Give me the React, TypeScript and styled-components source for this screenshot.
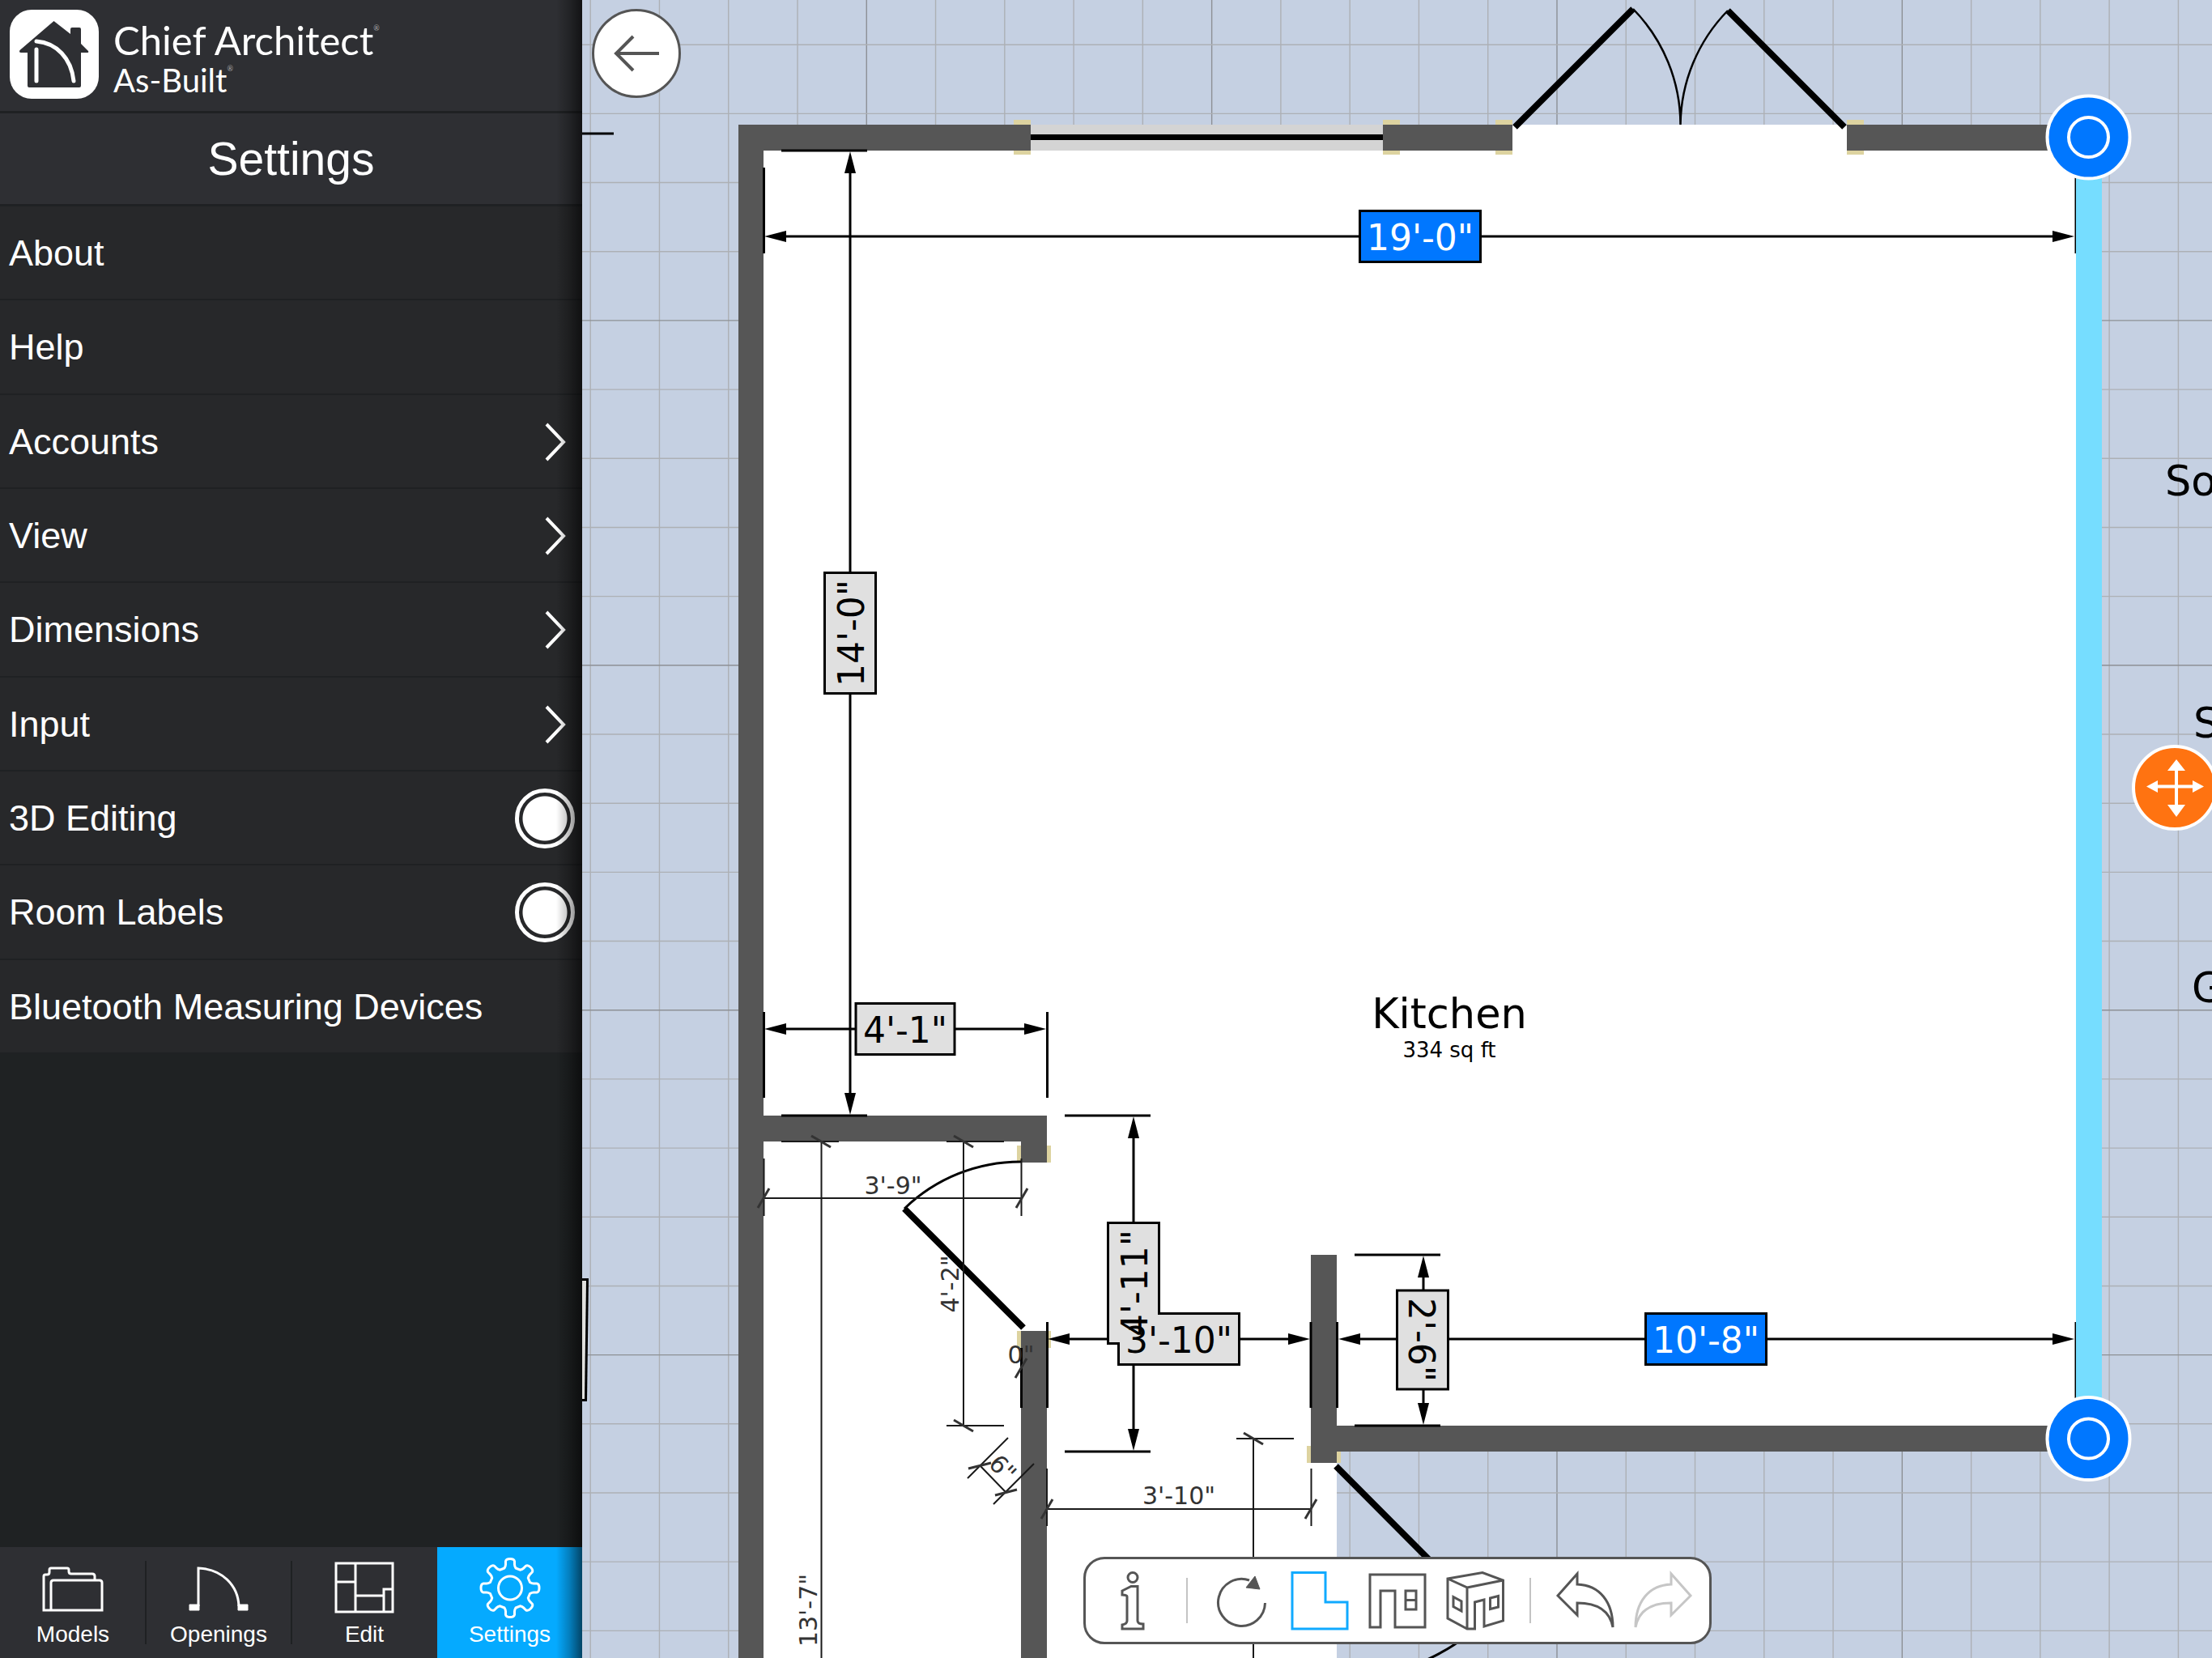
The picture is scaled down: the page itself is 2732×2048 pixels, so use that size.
import React from "react";
import styled, { createGlobalStyle } from "styled-components";

const GlobalStyle = createGlobalStyle`
  * { box-sizing: border-box; }
  html, body { margin: 0; padding: 0; }
  body { background: #c5d0e2; overflow: hidden; }
  button { font: inherit; color: inherit; border: 0; background: none; padding: 0; cursor: pointer; }
`;

const ui = `"Liberation Sans", Arial, sans-serif`;
const planFont = `"DejaVu Sans", Verdana, sans-serif`;

/* ---------- shell ---------- */

const Shell = styled.div`
  display: flex;
  height: 100vh;
  font-family: ${ui};
  color: #fff;
`;

const Panel = styled.aside`
  position: relative;
  flex: 0 0 719px;
  display: flex;
  flex-direction: column;
  background: #1f2223;
  &::after {
    content: "";
    position: absolute;
    top: 0;
    right: 0;
    bottom: 0;
    width: 32px;
    background: linear-gradient(to right, rgba(0, 0, 0, 0), rgba(0, 0, 0, 0.25) 50%, rgba(0, 0, 0, 0.6));
    pointer-events: none;
  }
`;

const Brand = styled.header`
  display: flex;
  align-items: center;
  gap: 18px;
  height: 140px;
  padding: 0 12px 3px;
  background: #2e2f33;
  border-bottom: 3px solid #1f2123;
`;

const BrandText = styled.div`
  display: flex;
  flex-direction: column;
  padding-top: 14px;
  font-family: "Lato", ${ui};
`;

const BrandLine = styled.span<{ $size: number }>`
  display: flex;
  align-items: flex-start;
  font-size: ${(p) => p.$size}px;
  line-height: 50px;
  height: 50px;
  white-space: nowrap;
`;

const Mark = styled.small`
  padding-top: 6px;
  font-size: 9px;
  line-height: 10px;
  color: #a8a8aa;
`;

const Title = styled.h1`
  margin: 0;
  height: 115px;
  border-bottom: 3px solid #1f2123;
  background: #2e2f33;
  font-size: 57px;
  font-weight: 400;
  line-height: 113px;
  text-align: center;
`;

const List = styled.ul`
  display: grid;
  grid-template-rows: repeat(9, 1fr);
  height: 1047px;
  margin: 0 0 auto;
  padding: 0;
  list-style: none;
`;

const Item = styled.li`
  background: #27282a;
  border-bottom: 2px solid #1f2123;
  font-size: 45px;
  button,
  label {
    display: flex;
    align-items: center;
    justify-content: space-between;
    width: 100%;
    height: 100%;
    padding: 2px 9px 0 11px;
    text-align: left;
    white-space: nowrap;
  }
`;

const Toggle = styled.input`
  appearance: none;
  margin: 0;
  width: 74px;
  height: 74px;
  border: 5px solid #fff;
  border-radius: 50%;
  background: radial-gradient(circle, #fff 27px, #27282a 28px);
`;

const TabBar = styled.nav`
  display: grid;
  grid-template-columns: repeat(3, 180px) 1fr;
  height: 137px;
  background: #2e2f33;
`;

const Tab = styled.button<{ $active?: boolean }>`
  position: relative;
  display: flex;
  flex-direction: column;
  align-items: center;
  padding-top: 13px;
  font-size: 28px;
  line-height: 32px;
  background: ${(p) => (p.$active ? "#05aaff" : "transparent")};
  svg { margin-bottom: 3px; }
  & + &::before {
    content: "";
    position: absolute;
    left: -1px;
    top: 17px;
    width: 2px;
    height: 103px;
    background: #1f2123;
  }
`;

/* ---------- canvas ---------- */

const Canvas = styled.main`
  position: relative;
  flex: 1;
  min-width: 0;
  overflow: hidden;
  background: #c5d0e2;
`;

const Drawing = styled.svg`
  display: block;
  width: 100%;
  height: 100%;
  font-family: ${planFont};
`;

const Back = styled.button`
  && {
    position: absolute;
    left: 12px;
    top: 11px;
    width: 110px;
    height: 110px;
    display: grid;
    place-items: center;
    border: 3px solid #555;
    border-radius: 50%;
    background: #fff;
    color: #555;
  }
`;

const ToolDock = styled.div`
  position: absolute;
  left: 0;
  right: 0;
  bottom: 17px;
  display: flex;
  justify-content: center;
  pointer-events: none;
`;

const Toolbar = styled.div`
  display: flex;
  align-items: center;
  height: 108px;
  padding: 0 9px;
  border: 3px solid #555;
  border-radius: 26px;
  background: #fff;
  pointer-events: auto;
`;

const Tool = styled.button<{ $color?: string }>`
  display: grid;
  place-items: center;
  width: 96px;
  height: 96px;
  color: ${(p) => p.$color || "#555"};
`;

const Divider = styled.span`
  width: 2px;
  height: 56px;
  margin: 0 19px;
  background: #c4c4c4;
`;

/* ---------- icons ---------- */

const Glyph = ({ children, size = 72, w = 3 }: { children: React.ReactNode; size?: number; w?: number }) => (
  <svg width={size} height={size} viewBox={`0 0 ${size} ${size}`} fill="none" stroke="currentColor" strokeWidth={w} aria-hidden="true" overflow="visible">
    {children}
  </svg>
);

const ChevronIcon = styled.svg`
  margin-right: 10px;
`;

const Chevron = () => (
  <ChevronIcon width="28" height="50" viewBox="0 0 28 50" fill="none" stroke="#fff" strokeWidth="4" aria-hidden="true">
    <path d="M3 3L24 25L3 47" />
  </ChevronIcon>
);

const LogoMark = () => (
  <svg width="110" height="110" viewBox="0 0 110 110" aria-hidden="true">
    <rect width="110" height="110" rx="27" fill="#fff" />
    <path
      d="M54.500 14L75 30V24Q75 22 77 22H86Q88 22 88 24V42L97 51Q98 53 95.500 53H88V94Q88 96 86 96H24Q22 96 22 94V53H14Q11 53 12.500 50Z"
      fill="#2e2f33"
    />
    <path d="M33 49V88M33 39C58 41 76 60 79 88" fill="none" stroke="#fff" strokeWidth="5" strokeLinecap="round" />
  </svg>
);

const gearPath = (() => {
  const cx = 38;
  const cy = 37.5;
  const parts: string[] = [];
  for (let i = 0; i < 8; i++) {
    const a = (i * Math.PI) / 4;
    const at = (r: number, t: number) => {
      const x = cx + r * Math.cos(a) - t * Math.sin(a);
      const y = cy + r * Math.sin(a) + t * Math.cos(a);
      return `${x.toFixed(2)} ${y.toFixed(2)}`;
    };
    parts.push(
      `${i === 0 ? "M" : "L"}${at(24.5, -7)}Q${at(27, -5.5)} ${at(29, -5.5)}L${at(33, -5.5)}Q${at(36, -5)} ${at(36, 0)}Q${at(36, 5)} ${at(33, 5.5)}L${at(29, 5.5)}Q${at(27, 5.5)} ${at(24.5, 7)}`
    );
  }
  return parts.join("") + "Z";
})();

/* ---------- plan pieces ---------- */

const GRID = 85.27;
const WALL = "#565656";
const TAN = "#ddd3a0";

const Grid = () => (
  <g strokeWidth="1.4">
    {Array.from({ length: 24 }, (_, i) => {
      const x = 729.2 + i * GRID;
      return <line key={`v${i}`} x1={x} x2={x} y1="0" y2="2048" stroke={i % 5 === 4 ? "#8d9095" : "#adb0b5"} />;
    })}
    {Array.from({ length: 24 }, (_, i) => {
      const y = 55.2 + i * 85.18;
      return <line key={`h${i}`} y1={y} y2={y} x1="719" x2="2732" stroke={i % 5 === 4 ? "#8d9095" : "#adb0b5"} />;
    })}
  </g>
);

const Arrow = ({ x, y, r }: { x: number; y: number; r: number }) => (
  <path d="M1 0L28 -7V7Z" transform={`translate(${x} ${y}) rotate(${r})`} />
);

const HDim = ({ y, x1, x2 }: { y: number; x1: number; x2: number }) => (
  <g>
    <line x1={x1 + 20} x2={x2 - 20} y1={y} y2={y} stroke="#000" strokeWidth="3" />
    <Arrow x={x1} y={y} r={0} />
    <Arrow x={x2} y={y} r={180} />
  </g>
);

const VDim = ({ x, y1, y2 }: { x: number; y1: number; y2: number }) => (
  <g>
    <line y1={y1 + 20} y2={y2 - 20} x1={x} x2={x} stroke="#000" strokeWidth="3" />
    <Arrow x={x} y={y1} r={90} />
    <Arrow x={x} y={y2} r={270} />
  </g>
);

const Tick = ({ x, y, vertical }: { x: number; y: number; vertical?: boolean }) => (
  <path d={vertical ? "M-12 -7L12 7" : "M-7 12L7 -12"} transform={`translate(${x} ${y})`} stroke="#333" strokeWidth="3" />
);

type TagProps = { x: number; y: number; w: number; r?: number; label: string; selected?: boolean };

const tags: TagProps[] = [
  { x: 1754, y: 292, w: 152, label: `19'-0"`, selected: true },
  { x: 1050, y: 782, w: 152, r: -90, label: `14'-0"` },
  { x: 1118, y: 1271, w: 125, label: `4'-1"` },
  { x: 1400, y: 1585, w: 152, r: -90, label: `4'-11"` },
  { x: 1456, y: 1654, w: 152, label: `3'-10"` },
  { x: 1757, y: 1655, w: 125, r: 90, label: `2'-6"` },
  { x: 2107, y: 1654, w: 152, label: `10'-8"`, selected: true },
];

const place = (t: TagProps) => `translate(${t.x} ${t.y}) rotate(${t.r || 0})`;

const Tags = () => (
  <g>
    {tags.map((t) => (
      <rect key={t.label} x={-t.w / 2} y={-33} width={t.w} height={66} transform={place(t)} fill="#000" />
    ))}
    {tags.map((t) => (
      <rect key={t.label} x={-t.w / 2 + 3} y={-30} width={t.w - 6} height={60} transform={place(t)} fill={t.selected ? "#0077ff" : "#e0e0e0"} />
    ))}
    {tags.map((t) => (
      <text key={t.label} y={17} transform={place(t)} fontSize="44" textAnchor="middle" fill={t.selected ? "#fff" : "#000"}>
        {t.label}
      </text>
    ))}
  </g>
);

const Knob = ({ y }: { y: number }) => (
  <g stroke="#fff" strokeWidth="4">
    <circle cx="2579.500" cy={y} r="51" fill="#0077ff" />
    <circle cx="2579.500" cy={y} r="24.500" fill="none" />
  </g>
);

const walls = [
  [912, 154, 361, 32],
  [912, 154, 31, 1894],
  [1708, 154, 160, 32],
  [2281, 154, 299, 32],
  [912, 1378, 381, 32],
  [1261, 1378, 32, 58],
  [1261, 1644, 32, 404],
  [1619, 1550, 32, 257],
  [1619, 1761, 961, 32],
];

const jambs = [
  [1252, 148, 21, 43],
  [1708, 148, 21, 43],
  [1847, 148, 21, 43],
  [2281, 148, 21, 43],
  [1256, 1415, 42, 21],
  [1256, 1644, 42, 21],
  [1614, 1786, 42, 21],
];

const extensions = [
  "M943.500 207V313M943.500 1250V1356M1293.500 1250V1356",
  "M965 186H1071M965 1378H1071M1315 1378H1421M1315 1793H1421",
  "M1261.500 1665V1739M1293.500 1633V1739M1619 1633V1739M1651.500 1633V1739",
  "M1673 1550H1779M1673 1761H1779M2564 207V313M2564 1633V1739",
];

const FloorPlan = () => (
  <Drawing viewBox="719 0 2013 2048" preserveAspectRatio="xMinYMin slice" role="img" aria-label="Kitchen floor plan">
    <Grid />
    <path d="M928 154H2580V1777H1651V2048H928Z" fill="#fff" />
    <g fill={TAN}>
      {jambs.map(([x, y, w, h], i) => (
        <rect key={i} x={x} y={y} width={w} height={h} />
      ))}
    </g>
    <g fill={WALL}>
      {walls.map(([x, y, w, h], i) => (
        <rect key={i} x={x} y={y} width={w} height={h} />
      ))}
    </g>
    <rect x="1273" y="154" width="435" height="32" fill="#d4d4d4" />
    <rect x="1273" y="166" width="435" height="7" fill="#000" />

    <g fill="none" stroke="#000">
      <path d="M1871 157L2017 11M2278 157L2134 13" strokeWidth="8" />
      <path d="M2017 11A205 205 0 0 1 2075.500 154A205 205 0 0 1 2134 13" strokeWidth="2.500" />
      <path d="M1264 1640L1117 1493M1650 1811L1837 1999" strokeWidth="8" />
      <path d="M1117 1493A206 206 0 0 1 1262 1435M1837 1999A265 265 0 0 1 1651 2074" strokeWidth="3" />
    </g>

    <g stroke="#000" strokeWidth="3" fill="none">
      {extensions.map((d) => (
        <path key={d} d={d} />
      ))}
      <path d="M719 165H758" />
    </g>
    <rect x="2564" y="170" width="32" height="1607" fill="#76ddff" />

    <HDim y={292} x1={943} x2={2563} />
    <HDim y={1271} x1={943} x2={1293} />
    <HDim y={1654} x1={1293} x2={1619} />
    <HDim y={1654} x1={1652} x2={2563} />
    <VDim x={1050} y1={186} y2={1378} />
    <VDim x={1400} y1={1378} y2={1793} />
    <VDim x={1758} y1={1550} y2={1761} />

    <g stroke="#1a1a1a" strokeWidth="2" fill="none">
      <path d="M943 1480H1262M943.500 1431V1502M1261.500 1431V1502" />
      <path d="M1190 1410V1761M1169 1410H1240M1169 1761H1240" />
      <path d="M1014.500 1410V2048M965 1410H1036" />
      <path d="M1293 1864H1619M1293 1814V1885M1619.500 1814V1885" />
      <path d="M1548 1777V2048M1527 1777H1598" />
      <path d="M1211 1811L1243 1844M1245 1776L1195 1826M1277 1808L1227 1858" />
      <Tick x={943} y={1480} />
      <Tick x={1262} y={1480} />
      <Tick x={1261} y={1690} />
      <Tick x={1293} y={1864} />
      <Tick x={1619} y={1864} />
      <Tick x={1190} y={1410} vertical />
      <Tick x={1190} y={1761} vertical />
      <Tick x={1014} y={1410} vertical />
      <Tick x={1548} y={1777} vertical />
      <path d="M1196 1814L1224 1807M1229 1847L1256 1840" stroke="#333" strokeWidth="3" />
    </g>

    <g fontSize="30" fill="#333" textAnchor="middle">
      <text x="1103" y="1475">3'-9"</text>
      <text x="1456" y="1858">3'-10"</text>
      <text x="1261" y="1684">0"</text>
      <text transform="translate(1184 1586) rotate(-90)">4'-2"</text>
      <text transform="translate(1009 1989) rotate(-90)">13'-7"</text>
      <text transform="translate(1231 1821) rotate(45)">6"</text>
    </g>

    <Tags />

    <g fill="#000" textAnchor="middle">
      <text x="1790" y="1270" fontSize="51">Kitchen</text>
      <text x="1790" y="1306" fontSize="26">334 sq ft</text>
    </g>
    <g fill="#000" fontSize="51">
      <text x="2674" y="612">So</text>
      <text x="2709" y="911">S</text>
      <text x="2707" y="1238">G</text>
    </g>

    <path d="M719 1579H727L725 1731H719Z" fill="#000" />
    <path d="M719 1582H724L722 1728H719Z" fill="#e0e0de" />

    <Knob y={169.5} />
    <Knob y={1777} />
    <g>
      <circle cx="2686" cy="973" r="51" fill="#ff7311" stroke="#fff" strokeWidth="4" />
      <path d="M2660 971.500H2712M2688 948V999" stroke="#fff" strokeWidth="4" />
      <path d="M2651 971.500L2665 964V979ZM2722 971.500L2708 964V979ZM2688 938L2677 952H2699ZM2688 1009L2677 994H2699Z" fill="#fff" />
    </g>
  </Drawing>
);

/* ---------- data ---------- */

const settings: { label: string; kind: "plain" | "more" | "toggle" }[] = [
  { label: "About", kind: "plain" },
  { label: "Help", kind: "plain" },
  { label: "Accounts", kind: "more" },
  { label: "View", kind: "more" },
  { label: "Dimensions", kind: "more" },
  { label: "Input", kind: "more" },
  { label: "3D Editing", kind: "toggle" },
  { label: "Room Labels", kind: "toggle" },
  { label: "Bluetooth Measuring Devices", kind: "plain" },
];

const tabs = [
  {
    label: "Models",
    art: <path d="M11 65H2V23Q2 21 4 21H6Q9 21 9 18V15Q9 13 11 13H31Q33 13 33 15V17Q33 20 36 20H62Q65 20 65 23V28M11 65V31Q11 28 14 28H71Q74 28 74 31V65Z" />,
  },
  {
    label: "Openings",
    art: (
      <>
        <path d="M13 60V13C42 14 62 34 63 60" />
        <path d="M2 58H14V65H2ZM62 58H74V65H62Z" fill="currentColor" strokeWidth="1" />
      </>
    ),
  },
  { label: "Edit", art: <path d="M3 7H73V67H3ZM27 7V67M3 30H27M27 47H62M62 67V39H73" /> },
  {
    label: "Settings",
    art: (
      <>
        <path d={gearPath} strokeLinejoin="round" />
        <circle cx="38" cy="37.500" r="14.500" />
      </>
    ),
  },
];

const undoPath = "M2 30L26 3V16C54 17 70 38 70 69C66 48 50 39 26 39V54Z";

export default function App() {
  return (
    <Shell>
      <GlobalStyle />
      <Panel>
        <Brand>
          <LogoMark />
          <BrandText>
            <BrandLine $size={49}>Chief Architect<Mark>®</Mark></BrandLine>
            <BrandLine $size={40}>As-Built<Mark>®</Mark></BrandLine>
          </BrandText>
        </Brand>
        <Title>Settings</Title>
        <List>
          {settings.map(({ label, kind }) => (
            <Item key={label}>
              {kind === "toggle" ? (
                <label>
                  {label}
                  <Toggle type="checkbox" defaultChecked />
                </label>
              ) : (
                <button type="button">
                  {label}
                  {kind === "more" && <Chevron />}
                </button>
              )}
            </Item>
          ))}
        </List>
        <TabBar>
          {tabs.map(({ label, art }) => (
            <Tab key={label} type="button" $active={label === "Settings"}>
              <Glyph size={76}>{art}</Glyph>
              {label}
            </Tab>
          ))}
        </TabBar>
      </Panel>
      <Canvas>
        <FloorPlan />
        <Back type="button" aria-label="Back">
          <Glyph size={56} w={4}>
            <path d="M56 28H4M24 7L3 28L24 49" />
          </Glyph>
        </Back>
        <ToolDock>
          <Toolbar role="toolbar" aria-label="Drawing tools">
            <Tool type="button" aria-label="Information">
              <Glyph>
                <circle cx="37" cy="7.500" r="6" />
                <path d="M24 24L35 18.500H43V61Q43 65 50 65V71H24V66Q30 65 30 61V31Q30 29 24 29Z" />
              </Glyph>
            </Tool>
            <Divider />
            <Tool type="button" aria-label="Rotate">
              <Glyph>
                <path d="M45 11A29 29 0 1 0 64.500 39" />
                <path d="M52 6L58 22L41 20Z" fill="currentColor" strokeWidth="1" />
              </Glyph>
            </Tool>
            <Tool type="button" aria-label="Plan view" $color="#10aaff">
              <Glyph>
                <path d="M2 1.500H43V38H70V71H2Z" />
              </Glyph>
            </Tool>
            <Tool type="button" aria-label="Elevation view">
              <Glyph>
                <path d="M2 4H70V69H33V24H15V69H2ZM46 24H59V47H46ZM46 35.500H59" />
              </Glyph>
            </Tool>
            <Tool type="button" aria-label="3D view">
              <Glyph>
                <path d="M2 9L45 1.500L70.500 11V61L47 68V35L35.500 38V71H26L2 58ZM2 9L26 20V71M26 20L70.500 11M9 31.500L19 37V49L9 43.500ZM54.500 33L64.500 30.500V44L54.500 46.500Z" />
              </Glyph>
            </Tool>
            <Divider />
            <Tool type="button" aria-label="Undo">
              <Glyph>
                <path d={undoPath} />
              </Glyph>
            </Tool>
            <Tool type="button" aria-label="Redo" $color="#c6c6c6" disabled>
              <Glyph>
                <path d={undoPath} transform="matrix(-1 0 0 1 72 0)" />
              </Glyph>
            </Tool>
          </Toolbar>
        </ToolDock>
      </Canvas>
    </Shell>
  );
}
